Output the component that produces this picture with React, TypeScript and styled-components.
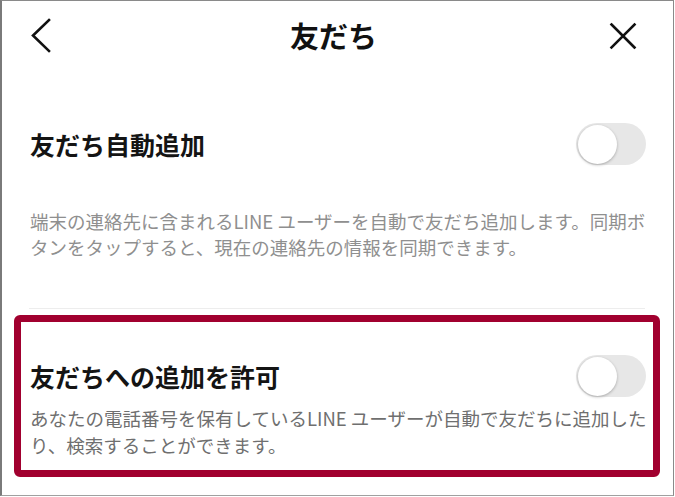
import React from "react";
import styled, { createGlobalStyle } from "styled-components";

const GlobalStyle = createGlobalStyle`
  html, body {
    margin: 0;
    padding: 0;
    background: #ffffff;
  }
  body {
    font-family: "Noto Sans CJK JP", "Noto Sans", sans-serif;
    -webkit-font-smoothing: antialiased;
  }
`;

const Frame = styled.div`
  position: relative;
  box-sizing: border-box;
  width: 674px;
  height: 496px;
  border-top: 1px solid #8a8a8a;
  border-left: 2px solid #7a7a7a;
  border-right: 1px solid #8a8a8a;
  border-bottom: 1px solid #a0a0a0;
  background: #ffffff;
  overflow: hidden;
`;

const Header = styled.header`
  display: grid;
  grid-template-columns: 1fr auto 1fr;
  align-items: center;
  height: 70px;
  padding: 0 36px 0 28px;
`;

const IconButton = styled.button<{ $align: "start" | "end" }>`
  justify-self: ${(p) => p.$align};
  display: flex;
  align-items: center;
  justify-content: center;
  padding: 0;
  border: none;
  background: none;
  color: #111111;
`;

const Title = styled.h1`
  margin: -2px 0 0 0;
  font-size: 29px;
  font-weight: 700;
  color: #111111;
  letter-spacing: 0;
`;

const Row = styled.div<{ $top: number }>`
  display: flex;
  align-items: center;
  justify-content: space-between;
  margin-top: ${(p) => p.$top}px;
  padding: 0 27px 0 28px;
  height: 42px;
`;

const SettingTitle = styled.div`
  font-size: 25px;
  font-weight: 700;
  color: #141414;
  line-height: 1;
`;

const Track = styled.div`
  box-sizing: border-box;
  display: flex;
  align-items: center;
  width: 70px;
  height: 42px;
  padding: 0 2px;
  border-radius: 21px;
  background: #e7e7e7;
`;

const Knob = styled.div`
  width: 39px;
  height: 39px;
  border-radius: 50%;
  background: #ffffff;
  box-shadow: 0 1px 3px rgba(0, 0, 0, 0.28);
`;

const Description = styled.p<{ $top: number; $lh: number; $color: string }>`
  margin: ${(p) => p.$top}px 0 0 0;
  padding: 0 20px 0 28px;
  font-size: 18.5px;
  line-height: ${(p) => p.$lh}px;
  color: ${(p) => p.$color};
  white-space: nowrap;
`;

const Divider = styled.div`
  margin: 48px 28px 0 27px;
  height: 1px;
  background: #ededed;
`;

const Highlight = styled.div`
  position: absolute;
  left: 12px;
  top: 314px;
  width: 646px;
  height: 162px;
  box-sizing: border-box;
  border: 7px solid #a1002f;
  border-radius: 6px;
  pointer-events: none;
`;

const Toggle: React.FC = () => (
  <Track>
    <Knob />
  </Track>
);

const ChevronLeft = () => (
  <svg width="22" height="36" viewBox="0 0 22 36" fill="none">
    <path
      d="M19 2 L3 17.5 L19 33"
      stroke="#111"
      strokeWidth="2.6"
      strokeLinecap="square"
    />
  </svg>
);

const CloseIcon = () => (
  <svg width="28" height="28" viewBox="0 0 28 28" fill="none">
    <path
      d="M2.5 2.5 L25.5 25.5 M25.5 2.5 L2.5 25.5"
      stroke="#111"
      strokeWidth="2.6"
      strokeLinecap="square"
    />
  </svg>
);

export default function App() {
  return (
    <>
      <GlobalStyle />
      <Frame>
        <Header>
          <IconButton $align="start" aria-label="戻る">
            <ChevronLeft />
          </IconButton>
          <Title>友だち</Title>
          <IconButton $align="end" aria-label="閉じる">
            <CloseIcon />
          </IconButton>
        </Header>

        <Row $top={52}>
          <SettingTitle>友だち自動追加</SettingTitle>
          <Toggle />
        </Row>
        <Description $top={43} $lh={26} $color="#8f8f8f">
          端末の連絡先に含まれるLINE ユーザーを自動で友だち追加します。同期ボ
          <br />
          タンをタップすると、現在の連絡先の情報を同期できます。
        </Description>

        <Divider />

        <Row $top={46}>
          <SettingTitle>友だちへの追加を許可</SettingTitle>
          <Toggle />
        </Row>
        <Description $top={8} $lh={27} $color="#6f6f6f">
          あなたの電話番号を保有しているLINE ユーザーが自動で友だちに追加した
          <br />
          り、検索することができます。
        </Description>

        <Highlight />
      </Frame>
    </>
  );
}
